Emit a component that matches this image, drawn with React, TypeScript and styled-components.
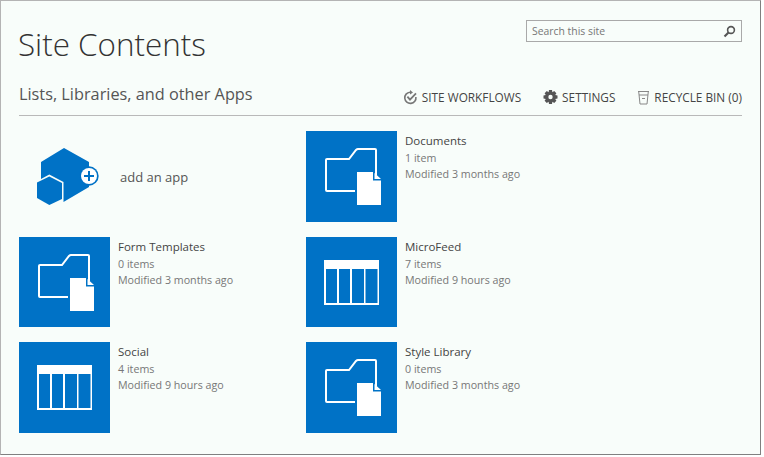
import { ReactNode } from "react";
import styled, { createGlobalStyle } from "styled-components";

const GlobalStyle = createGlobalStyle`
  html, body {
    margin: 0;
    background: #fff;
    font-family: "Open Sans", "Liberation Sans", sans-serif;
  }
`;

const FolderIcon = () => (
  <svg width="91" height="91" viewBox="0 0 91 91">
    <path
      d="M49 60H21Q20 60 20 59V29Q20 28 21 28H43L50 19Q51 18 52 18H69Q70 18 70 19V44"
      fill="none"
      stroke="#fff"
      strokeWidth="2"
    />
    <path d="M51 41H67V49.5H75V74H51Z" fill="#fff" />
    <path d="M68.5 42L75 48H68.5Z" fill="#fff" />
  </svg>
);

const TableIcon = () => (
  <svg width="91" height="91" viewBox="0 0 91 91">
    <rect x="18" y="23" width="55" height="45" fill="#fff" />
    <rect x="20" y="32" width="11" height="34" fill="#0072c6" />
    <rect x="33" y="32" width="11" height="34" fill="#0072c6" />
    <rect x="46" y="32" width="12" height="34" fill="#0072c6" />
    <rect x="59.5" y="32" width="12" height="34" fill="#0072c6" />
  </svg>
);

const AddAppIcon = () => (
  <svg width="65" height="60" viewBox="0 0 65 60">
    <path d="M28 1L53 15V40L27.5 55V35L13.3 27.5L5 32V15Z" fill="#0072c6" />
    <path d="M13.3 29.5L26 36V52L13.3 58L1 51V35.5Z" fill="#0072c6" />
    <circle cx="53" cy="29" r="9.7" fill="#0072c6" />
    <circle cx="53" cy="29" r="8" fill="#fff" />
    <path d="M53 24V34M48 29H58" stroke="#0072c6" strokeWidth="2" />
  </svg>
);

const SearchIcon = () => (
  <svg width="13" height="13" viewBox="0 0 13 13">
    <circle cx="8" cy="5" r="3.4" fill="none" stroke="#555" strokeWidth="1.6" />
    <path d="M5.5 7.5L1.5 11.5" stroke="#555" strokeWidth="2.2" />
  </svg>
);

const WorkflowIcon = () => (
  <svg width="15" height="15" viewBox="0 0 15 15">
    <path d="M7 2.2A5.6 5.6 0 1 0 12.9 7" fill="none" stroke="#777" strokeWidth="1.6" />
    <path d="M7 0L10 2.4L7 4.6Z" fill="#777" />
    <path d="M4.4 6.6L7 9.6L13 3.4" fill="none" stroke="#777" strokeWidth="1.8" />
  </svg>
);

const GearIcon = () => (
  <svg width="15" height="15" viewBox="0 0 15 15">
    <path
      d="M6 0H9L9.4 2.2L11.2 1L13.4 3.2L12.2 5L14.5 5.5V8.5L12.2 9L13.4 10.8L11.2 13L9.4 11.8L9 14H6L5.6 11.8L3.8 13L1.6 10.8L2.8 9L.5 8.5V5.5L2.8 5L1.6 3.2L3.8 1L5.6 2.2Z"
      fill="#555"
    />
    <circle cx="7.5" cy="7" r="2.2" fill="#f8fdfa" />
  </svg>
);

const BinIcon = () => (
  <svg width="13" height="15" viewBox="0 0 13 15">
    <path d="M1 1.5H12M1.7 1.5L3 14H10L11.3 1.5M2 5H11" fill="none" stroke="#888" strokeWidth="1" />
    <path d="M5 8.5H8" stroke="#888" strokeWidth="1" />
  </svg>
);

type TileProps = {
  icon: ReactNode;
  title: string;
  count: string;
  modified: string;
};

const AppTile = ({ icon, title, count, modified }: TileProps) => (
  <Tile>
    <Thumb>{icon}</Thumb>
    <Info>
      <TileTitle>{title}</TileTitle>
      <Meta>{count}</Meta>
      <Meta>Modified {modified}</Meta>
    </Info>
  </Tile>
);

const App = () => (
  <Frame>
    <GlobalStyle />
    <Header>
      <PageTitle>Site Contents</PageTitle>
      <SearchBox>
        <SearchHint>Search this site</SearchHint>
        <SearchIcon />
      </SearchBox>
    </Header>
    <SectionBar>
      <SectionTitle>Lists, Libraries, and other Apps</SectionTitle>
      <Actions>
        <Action>
          <WorkflowIcon />
          SITE WORKFLOWS
        </Action>
        <Action>
          <GearIcon />
          SETTINGS
        </Action>
        <Action>
          <BinIcon />
          RECYCLE BIN (0)
        </Action>
      </Actions>
    </SectionBar>
    <Tiles>
      <AddApp>
        <AddAppIcon />
        <AddAppLabel>add an app</AddAppLabel>
      </AddApp>
      <AppTile icon={<FolderIcon />} title="Documents" count="1 item" modified="3 months ago" />
      <AppTile icon={<FolderIcon />} title="Form Templates" count="0 items" modified="3 months ago" />
      <AppTile icon={<TableIcon />} title="MicroFeed" count="7 items" modified="9 hours ago" />
      <AppTile icon={<TableIcon />} title="Social" count="4 items" modified="9 hours ago" />
      <AppTile icon={<FolderIcon />} title="Style Library" count="0 items" modified="3 months ago" />
    </Tiles>
  </Frame>
);

const Frame = styled.div`
  box-sizing: border-box;
  width: 761px;
  height: 455px;
  padding: 0 18px 0 18px;
  background: #f8fdfa;
  border: 1px solid #b4b4b4;
  border-right-color: #808080;
  border-bottom-color: #808080;
`;

const Header = styled.header`
  display: flex;
  justify-content: space-between;
  align-items: flex-start;
  height: 73px;
`;

const PageTitle = styled.h1`
  margin: 21px 0 0 -1px;
  font-size: 31.4px;
  line-height: 44px;
  font-weight: 300;
  color: #333;
`;

const SearchBox = styled.div`
  box-sizing: border-box;
  display: flex;
  align-items: center;
  justify-content: space-between;
  width: 216px;
  height: 22px;
  margin-top: 19px;
  padding: 0 5px;
  border: 1px solid #a9a9a9;
`;

const SearchHint = styled.span`
  font-size: 10.4px;
  color: #777;
`;

const SectionBar = styled.div`
  box-sizing: border-box;
  display: flex;
  justify-content: space-between;
  align-items: center;
  height: 42px;
  padding-bottom: 1px;
  border-bottom: 1px solid #b9b9b9;
`;

const SectionTitle = styled.h2`
  margin: 0;
  font-size: 16.3px;
  font-weight: 400;
  color: #555;
`;

const Actions = styled.nav`
  display: flex;
  align-items: center;
  gap: 22px;
  margin-top: 6px;
`;

const Action = styled.span`
  display: flex;
  align-items: center;
  gap: 4px;
  font-size: 11.8px;
  color: #444;
`;

const Tiles = styled.div`
  display: grid;
  grid-template-columns: 287px 287px;
  grid-template-rows: 91px 90px 91px;
  row-gap: 15px;
  margin-top: 15px;
`;

const Tile = styled.div`
  display: flex;
  gap: 8px;
`;

const Thumb = styled.div`
  width: 91px;
  height: 100%;
  background: #0072c6;
`;

const Info = styled.div`
  padding-top: 2px;
  font-size: 10.7px;
  line-height: 16.5px;
`;

const TileTitle = styled.div`
  font-size: 11.5px;
  color: #444;
`;

const Meta = styled.div`
  color: #777;
`;

const AddApp = styled.div`
  display: flex;
  align-items: center;
  gap: 19px;
  padding-left: 17px;
`;

const AddAppLabel = styled.span`
  font-size: 13px;
  color: #555;
`;

export default App;
